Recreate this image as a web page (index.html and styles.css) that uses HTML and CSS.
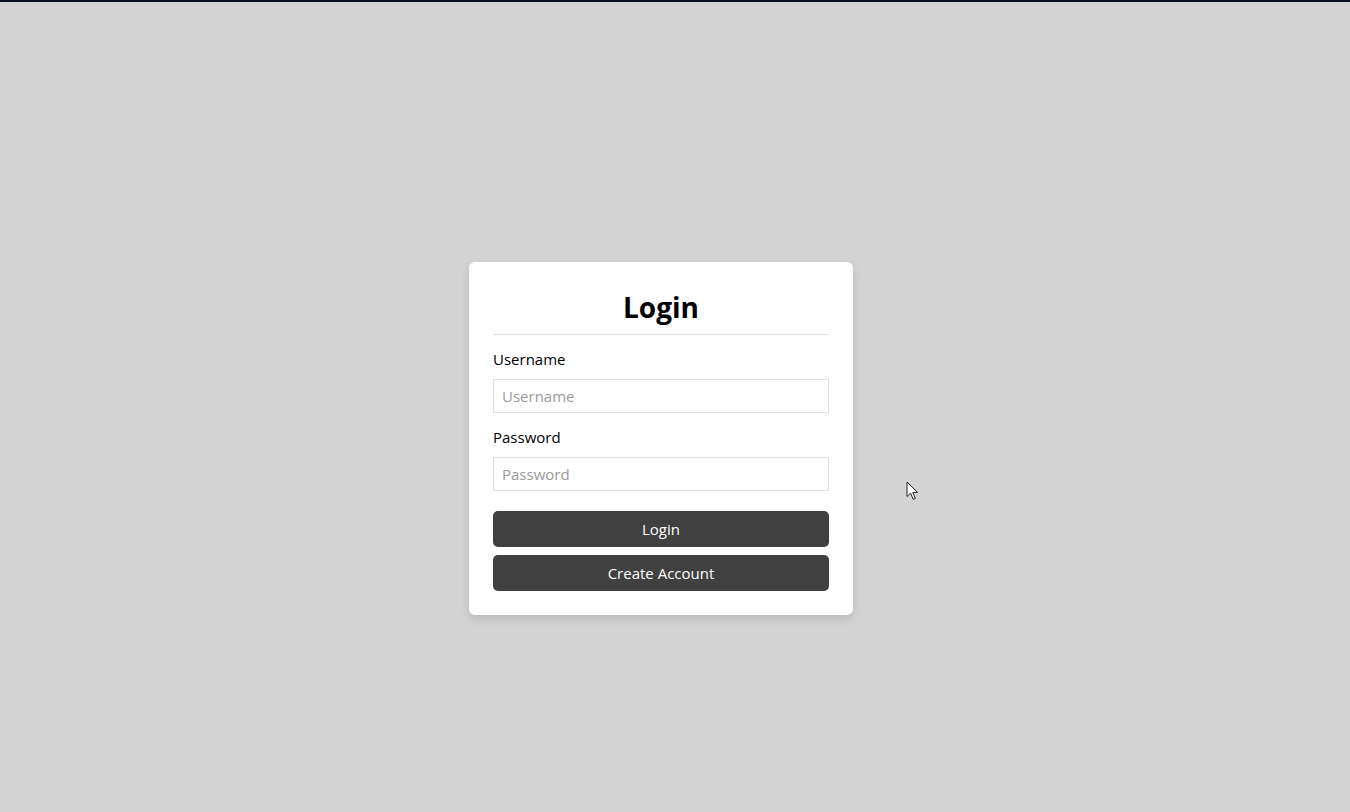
FILE: index.html
```html
<!DOCTYPE html>
<html lang="en">
<head>
<meta charset="utf-8">
<title>Login</title>
<link rel="stylesheet" href="styles.css">
</head>
<body>
<div class="topbar"></div>
<main class="page">
  <form class="card" onsubmit="return false">
    <h1 class="title">Login</h1>
    <label class="label" for="u">Username</label>
    <input class="input" id="u" type="text" placeholder="Username">
    <label class="label" for="p">Password</label>
    <input class="input" id="p" type="password" placeholder="Password">
    <div class="actions">
      <button class="btn" type="submit">Login</button>
      <button class="btn" type="button">Create Account</button>
    </div>
  </form>
</main>
<svg class="cursor" width="13" height="20" viewBox="0 0 13 20" aria-hidden="true">
  <path d="M1 1 L1 15.5 L4.6 12.2 L7.2 18.3 L9.3 17.4 L6.8 11.4 L11.6 11.4 Z" fill="#fff" stroke="#222" stroke-width="1" stroke-linejoin="round"/>
</svg>
</body>
</html>
```

FILE: styles.css
```css
html, body {
  margin: 0;
  padding: 0;
}
body {
  background: #d3d3d3;
  font-family: "Open Sans", "Noto Sans", "Liberation Sans", sans-serif;
  color: #000;
  position: relative;
  min-height: 100vh;
  overflow: hidden;
}
.topbar {
  height: 2px;
  background: #0b1028;
}
.page {
  box-sizing: border-box;
  min-height: calc(100vh - 2px);
  display: flex;
  align-items: center;
  justify-content: center;
  padding: 63px 28px 0 0;
}
.card {
  box-sizing: border-box;
  width: 384px;
  background: #fff;
  border-radius: 6px;
  padding: 25px 24px 24px;
  box-shadow: 0 4px 10px rgba(0, 0, 0, 0.12);
  display: flex;
  flex-direction: column;
}
.title {
  margin: 0;
  font-size: 28px;
  font-weight: 700;
  line-height: 40px;
  text-align: center;
  padding-bottom: 7px;
  border-bottom: 1px solid #e0e0e0;
}
.label {
  font-size: 15px;
  line-height: 20px;
  margin-top: 14px;
  margin-bottom: 10px;
}
.input {
  box-sizing: border-box;
  height: 34px;
  width: 100%;
  border: 1px solid #dedede;
  border-radius: 0;
  padding: 0 8px;
  font-family: inherit;
  font-size: 15px;
  color: #222;
  outline: none;
  background: #fff;
}
.input::placeholder {
  color: #9a9a9a;
}
.actions {
  margin-top: 20px;
  display: flex;
  flex-direction: column;
  gap: 8px;
}
.btn {
  height: 36px;
  width: 100%;
  border: none;
  border-radius: 5px;
  background: #404040;
  color: #fff;
  font-family: inherit;
  font-size: 15px;
  cursor: pointer;
}
.cursor {
  position: absolute;
  left: 906px;
  top: 481px;
}
```
